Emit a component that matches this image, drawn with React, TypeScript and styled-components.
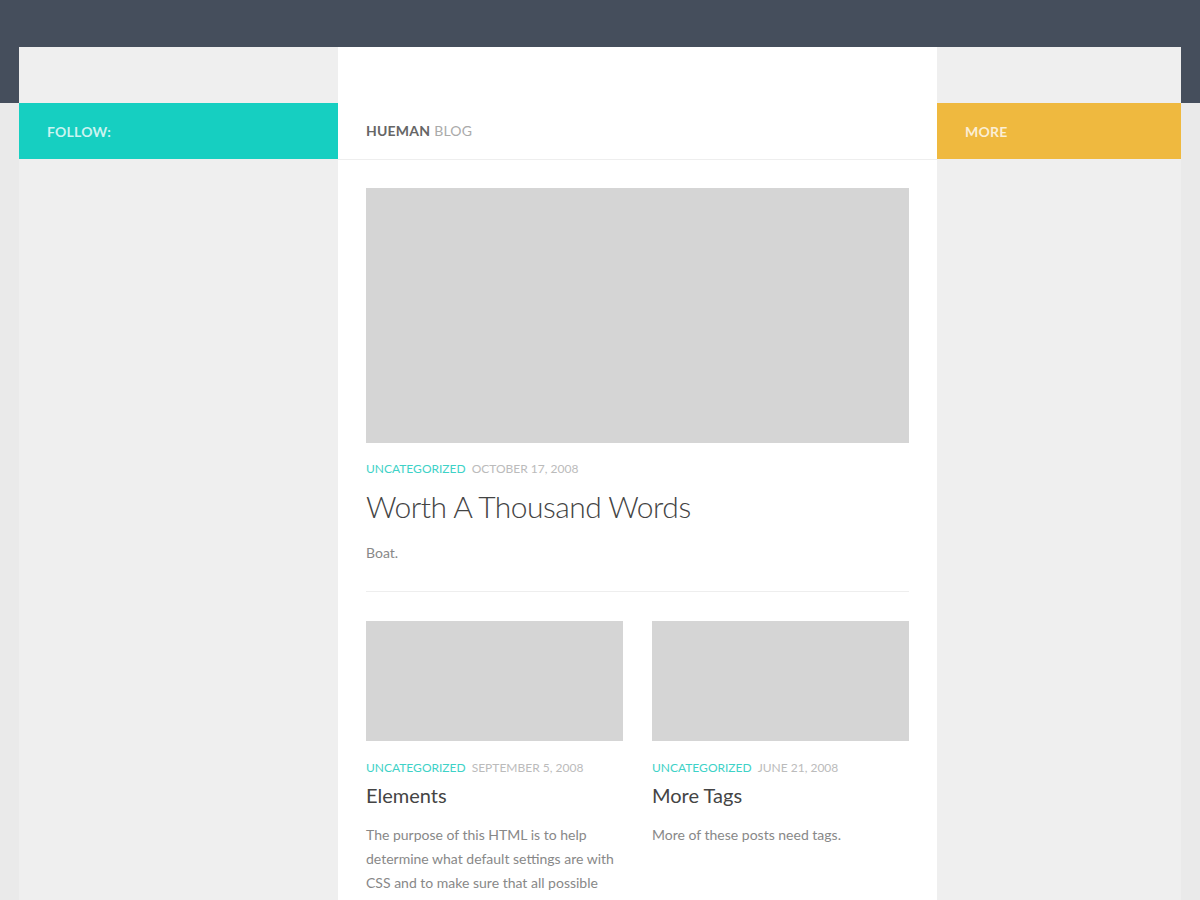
import React from 'react';
import styled, { createGlobalStyle } from 'styled-components';

const GlobalStyle = createGlobalStyle`
	body {
		margin: 0;
		font-family: Lato, "Noto Sans", Arial, sans-serif;
		background: linear-gradient(#454e5c 0, #454e5c 103px, #eaeaea 103px);
		min-height: 900px;
	}
`;

const Wrapper = styled.div`
	padding-top: 47px;
	margin: 0 19px;
	display: grid;
	grid-template-columns: 319px 599px 244px;
	min-height: 853px;
`;

const Sidebar = styled.aside`
	background-color: #efefef;
	padding-top: 56px;
`;

const SidebarBar = styled.div<{ $color: string }>`
	background-color: ${(p) => p.$color};
	height: 56px;
	display: flex;
	align-items: center;
	padding: 0 28px;
	font-size: 14px;
	font-weight: 700;
	letter-spacing: 0.2px;
	color: rgba(255, 255, 255, 0.78);
	text-transform: uppercase;
`;

const Main = styled.main`
	background-color: #fff;
`;

const PageTitle = styled.div`
	height: 113px;
	box-sizing: border-box;
	border-bottom: 1px solid #eee;
	display: flex;
	align-items: flex-end;
	padding: 0 28px 20px;
	font-size: 14px;
	font-weight: 700;
	text-transform: uppercase;
	color: #666;
	letter-spacing: 0.2px;
`;

const Faded = styled.span`
	color: #aaa;
	font-weight: 400;
	margin-left: 4px;
`;

const Content = styled.div`
	padding: 28px;
`;

const Thumb = styled.div<{ $height: number }>`
	background-color: #d5d5d5;
	height: ${(p) => p.$height}px;
`;

const Meta = styled.div`
	font-size: 12px;
	text-transform: uppercase;
	margin-top: 18px;
	line-height: 16px;
	color: #bbb;
	display: flex;
	gap: 6px;
`;

const Category = styled.span`
	color: #3ed2c7;
`;

const FeaturedTitle = styled.h2`
	margin: 9px 0 0;
	font-size: 30px;
	font-weight: 300;
	color: #444;
	line-height: 40px;
	letter-spacing: -0.5px;
`;

const Excerpt = styled.p`
	margin: 0;
	font-size: 14px;
	line-height: 24px;
	color: #888;
`;

const Featured = styled.article`
	padding-bottom: 26px;
	border-bottom: 1px solid #eee;
	margin-bottom: 29px;

	${Excerpt} {
		margin-top: 15px;
	}
`;

const Grid = styled.div`
	display: grid;
	grid-template-columns: 1fr 1fr;
	column-gap: 29px;

	${Meta} {
		margin-top: 19px;
	}
`;

const PostTitle = styled.h3`
	margin: 6px 0 15px;
	font-size: 20px;
	font-weight: 400;
	color: #444;
	line-height: 26px;
`;

const posts = [
	{
		date: 'September 5, 2008',
		title: 'Elements',
		text: 'The purpose of this HTML is to help determine what default settings are with CSS and to make sure that all possible HTML Elements are included in this HTML so as to not miss any possible Elements when designing a site.',
	},
	{
		date: 'June 21, 2008',
		title: 'More Tags',
		text: 'More of these posts need tags.',
	},
];

const App: React.FC = () => {
	return (
		<>
			<GlobalStyle />
			<Wrapper>
				<Sidebar>
					<SidebarBar $color="#16cfc1">Follow:</SidebarBar>
				</Sidebar>
				<Main>
					<PageTitle>
						Hueman<Faded>Blog</Faded>
					</PageTitle>
					<Content>
						<Featured>
							<Thumb $height={255} />
							<Meta>
								<Category>Uncategorized</Category>
								<span>October 17, 2008</span>
							</Meta>
							<FeaturedTitle>Worth A Thousand Words</FeaturedTitle>
							<Excerpt>Boat.</Excerpt>
						</Featured>
						<Grid>
							{posts.map((post) => (
								<article key={post.title}>
									<Thumb $height={120} />
									<Meta>
										<Category>Uncategorized</Category>
										<span>{post.date}</span>
									</Meta>
									<PostTitle>{post.title}</PostTitle>
									<Excerpt>{post.text}</Excerpt>
								</article>
							))}
						</Grid>
					</Content>
				</Main>
				<Sidebar>
					<SidebarBar $color="#efb93f">More</SidebarBar>
				</Sidebar>
			</Wrapper>
		</>
	);
};

export default App;
